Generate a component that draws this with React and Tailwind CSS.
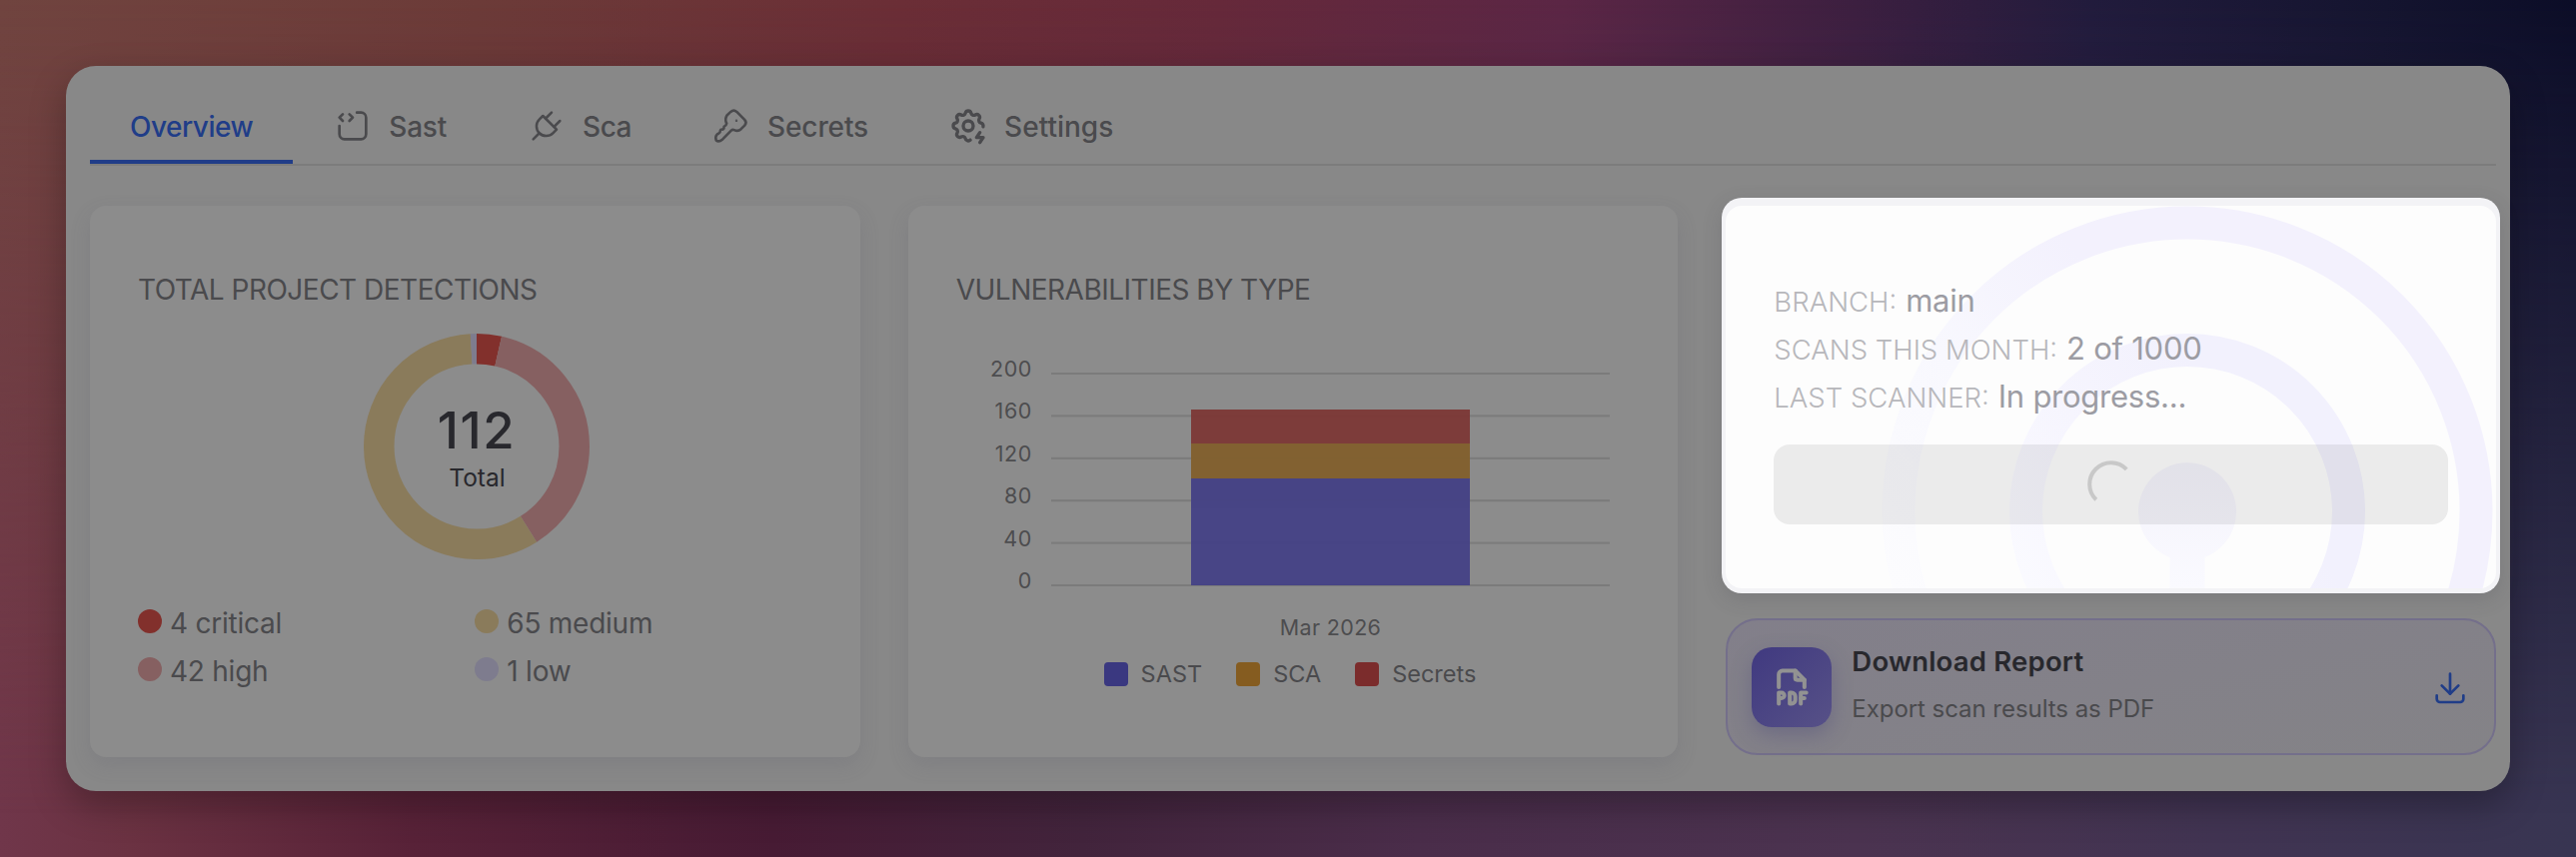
import { TbSourceCode, TbPlug, TbSettingsBolt, TbFileTypePdf, TbDownload } from 'react-icons/tb';

const KeyIcon = () => (
  <svg width="40" height="40" viewBox="0 0 40 40" fill="none" stroke="currentColor" strokeWidth="2.6" strokeLinecap="round" strokeLinejoin="round">
    <path d="M15.5 9.5 L19.3 5.9 Q22.3 3.4 25.3 5.9 L33.2 13.8 Q35.8 16.6 33.2 19.6 L29.6 23.2 Q26.6 26 22.8 24.1 Q21 23.4 19.8 24.6 L11.2 33.4 Q7.4 36.6 4.7 34.4 Q3.4 30.6 5.8 28.4 L7.6 27.3 Q8.9 26.8 8.9 24.6 Q9.2 23.4 11 23.6 Q12.7 23.4 12.6 20.8 Q14.8 20 15.2 17.5 Q13 13.6 15.5 9.5 Z" />
    <circle cx="25" cy="14.7" r="0.4" strokeWidth="1.6" />
  </svg>
);

const tabs = [
  { label: 'Overview', icon: null, active: true, tracking: 'tracking-[-0.48px]' },
  { label: 'Sast', icon: <TbSourceCode size={40} strokeWidth={1.6} />, tracking: 'tracking-[-0.2px]' },
  { label: 'Sca', icon: <TbPlug size={40} strokeWidth={1.5} />, tracking: 'tracking-[-0.5px]' },
  { label: 'Secrets', icon: <KeyIcon />, tracking: 'tracking-[-0.1px]' },
  { label: 'Settings', icon: <TbSettingsBolt size={40} strokeWidth={2} />, tracking: 'tracking-[0px]' },
];

const severities = [
  { count: 4, label: 'critical', color: '#82302c' },
  { count: 42, label: 'high', color: '#866061' },
  { count: 65, label: 'medium', color: '#8a7b5b' },
  { count: 1, label: 'low', color: '#7e7c8e' },
];

const legend = [
  { label: 'SAST', color: 'bg-[#3a3880]' },
  { label: 'SCA', color: 'bg-[#855c20]' },
  { label: 'Secrets', color: 'bg-[#7b2c2c]' },
];

const scanInfo = [
  { label: 'BRANCH:', value: 'main' },
  { label: 'SCANS THIS MONTH:', value: '2 of 1000' },
  { label: 'LAST SCANNER:', value: 'In progress...' },
];

const Donut = () => {
  const total = severities.reduce((sum, s) => sum + s.count, 0);
  let offset = 0;

  return (
    <svg width="226" height="226" viewBox="0 0 226 226">
      <g transform="rotate(-90 113 113)" fill="none" strokeWidth="30.5">
        {severities.map((s) => {
          const start = offset;
          offset += s.count;
          return (
            <circle
              key={s.label}
              cx="113"
              cy="113"
              r="97.75"
              pathLength={total}
              stroke={s.color}
              strokeDasharray={`${s.count} ${total - s.count}`}
              strokeDashoffset={-start}
            />
          );
        })}
      </g>
      <text x="113" y="115" textAnchor="middle" fontSize="51" letterSpacing="1.6" fontWeight="500" fill="#28282d">{total}</text>
      <text x="113.5" y="153" textAnchor="middle" fontSize="24.5" fill="#28282d">Total</text>
    </svg>
  );
};

const BarChart = () => {
  const ticks = [200, 160, 120, 80, 40, 0];

  return (
    <svg width="674" height="290" viewBox="0 0 674 290" className="block">
      {ticks.map((t, i) => (
        <g key={t}>
          <rect x="95" y={20 + i * 42.4} width="559" height="2" fill="#7b7b7b" />
          <text x="76" y={24 + i * 42.4} textAnchor="end" fontSize="21.5" letterSpacing="0.6" fill="#4d4d4f">{t}</text>
        </g>
      ))}
      <g opacity="0.96">
        <rect x="235" y="57" width="279" height="34" fill="#7d3937" />
        <rect x="235" y="91" width="279" height="35" fill="#82602e" />
        <rect x="235" y="126" width="279" height="107" fill="#454285" />
      </g>
      <text x="374.5" y="283" textAnchor="middle" fontSize="21.5" letterSpacing="0.35" fill="#4d4d4f">Mar 2026</text>
    </svg>
  );
};

const Radar = () => (
  <svg className="absolute inset-0" width="771" height="383" viewBox="0 0 771 383" fill="none">
    <defs>
      <linearGradient id="ring" gradientUnits="userSpaceOnUse" x1="160" y1="370" x2="520" y2="60">
        <stop offset="0" stopColor="#fcfcfe" />
        <stop offset="0.4" stopColor="#f8f8fe" />
        <stop offset="0.75" stopColor="#f3f1fd" />
      </linearGradient>
      <linearGradient id="ringInner" gradientUnits="userSpaceOnUse" x1="290" y1="360" x2="560" y2="180">
        <stop offset="0" stopColor="#fafaff" />
        <stop offset="0.4" stopColor="#f6f5fe" />
        <stop offset="0.8" stopColor="#f2f1fd" />
      </linearGradient>
      <linearGradient id="dot" gradientUnits="userSpaceOnUse" x1="462" y1="257" x2="462" y2="383">
        <stop offset="0" stopColor="#f4f3fb" />
        <stop offset="1" stopColor="#fafaff" />
      </linearGradient>
    </defs>
    <circle cx="462" cy="306" r="289" stroke="url(#ring)" strokeWidth="33" />
    <circle cx="462" cy="306" r="161.5" stroke="url(#ringInner)" strokeWidth="33" />
    <path d="M444.5 383 V352 A49 49 0 1 1 479.5 352 V383 Z" fill="url(#dot)" />
  </svg>
);

const ScanCard = () => (
  <div className="-mx-1 -mt-2 rounded-[20px] bg-[#f3f3f6] px-1 pt-2 pb-[5px] shadow-[0_6px_20px_rgba(60,60,70,0.18)]">
    <div className="relative h-[383px] overflow-hidden rounded-2xl bg-[#fdfdfd]">
      <Radar />
      <div className="relative px-12 pt-[71px]">
        {scanInfo.map((row) => (
          <div key={row.label} className="flex h-12 items-baseline gap-[9px] whitespace-nowrap leading-[48px]">
            <span className="text-[27.5px] font-light text-[#b7b7bb]">{row.label}</span>
            <span className="text-[31px] tracking-[-0.25px] text-[#9c9ca3]">{row.value}</span>
          </div>
        ))}
        <button className="mt-6 flex h-20 w-full items-center justify-center rounded-2xl bg-[#18181b]/8">
          <svg width="48" height="48" viewBox="0 0 48 48" fill="none">
            <path d="M39.2 8.8 A21.5 21.5 0 1 0 8.8 39.2" stroke="#c8c8c8" strokeWidth="4" />
          </svg>
        </button>
      </div>
    </div>
  </div>
);

const DownloadCard = () => (
  <div className="mt-[25px] flex h-[137px] items-center rounded-[32px] border-2 border-[#746f8b] bg-gradient-to-br from-[#827f8a] to-[#848387] px-6">
    <div className="flex h-20 w-20 items-center justify-center rounded-[20px] bg-gradient-to-br from-[#403980] to-[#575187] text-[#929292] shadow-[0_8px_20px_rgba(70,65,120,0.35)]">
      <TbFileTypePdf size={44} strokeWidth={2.2} />
    </div>
    <div className="ml-5 flex-1 pb-[3px]">
      <div className="text-[27.5px] leading-[47px] font-semibold tracking-[0.2px] text-[#28282d]">Download Report</div>
      <div className="text-2xl leading-[47px] tracking-[-0.05px] text-[#4a4a4d]">Export scan results as PDF</div>
    </div>
    <TbDownload size={40} strokeWidth={1.6} className="text-[#203d88]" />
  </div>
);

export default function App() {
  return (
    <div className="relative h-[858px] w-[2578px] overflow-hidden bg-[linear-gradient(90deg,#70364a_0%,#6b3242_5%,#582238_16%,#471b34_30%,#42243c_42%,#4a2d4a_55%,#4b3350_72%,#413452_86%,#383552_100%)] p-[66px] font-['Inter','Liberation_Sans',sans-serif]">
      <div className="absolute inset-0 bg-[linear-gradient(95deg,#70443f_0%,#6c3b38_18%,#6b2e36_34%,#66293a_46%,#5b2645_59%,#3c1f40_70%,#211b3c_79%,#14142f_90%,#080a24_100%)] [mask-image:linear-gradient(180deg,black_0%,transparent_95%)]" />

      <div className="relative h-[726px] w-[2446px] rounded-[30px] bg-[#888888] pt-[26px] pr-[14px] pl-6 shadow-[0_14px_36px_rgba(0,0,0,0.28)]">
        {/* Tabs */}
        <nav className="flex border-b-2 border-[#7c7c7c]">
          {tabs.map((tab) => (
            <div
              key={tab.label}
              className={`flex h-[72px] items-center gap-4 border-b-4 px-10 text-[28px] font-medium ${tab.active ? 'border-[#203d88] text-[#203d88]' : 'border-transparent text-[#4a4a4d]'}`}
            >
              {tab.icon}
              <span className={`pt-0.5 ${tab.tracking}`}>{tab.label}</span>
            </div>
          ))}
        </nav>

        <div className="mt-10 grid h-[552px] grid-cols-3 gap-12">
          {/* Detections */}
          <section className="rounded-2xl bg-[#8c8c8c] px-12 pt-[66px] shadow-[0_8px_20px_rgba(90,90,105,0.18)]">
            <h2 className="text-[28px] leading-9 tracking-[-0.5px] text-[#4a4a4d]">TOTAL PROJECT DETECTIONS</h2>
            <div className="mt-[26px] flex justify-center pl-[3px]">
              <Donut />
            </div>
            <div className="mt-[38px] grid grid-flow-col grid-cols-2 grid-rows-2">
              {severities.map((s) => (
                <div key={s.label} className="flex h-12 items-center gap-2 text-[28px] tracking-[-0.25px] text-[#4a4a4d]">
                  <span className="h-6 w-6 rounded-full" style={{ backgroundColor: s.color }} />
                  <span className="pt-1">{s.count} {s.label}</span>
                </div>
              ))}
            </div>
          </section>

          {/* Vulnerabilities */}
          <section className="rounded-2xl bg-[#8c8c8c] px-12 pt-[66px] shadow-[0_8px_20px_rgba(90,90,105,0.18)]">
            <h2 className="text-[28px] leading-9 tracking-[-0.5px] text-[#4a4a4d]">VULNERABILITIES BY TYPE</h2>
            <div className="mt-[45px]">
              <BarChart />
            </div>
            <div className="mt-[14px] flex justify-center gap-[34px] pr-[6px]">
              {legend.map((item) => (
                <div key={item.label} className="flex items-center gap-[13px] text-[23.5px] leading-9 text-[#4a4a4d]">
                  <span className={`h-6 w-6 rounded ${item.color}`} />
                  {item.label}
                </div>
              ))}
            </div>
          </section>

          <section>
            <ScanCard />
            <DownloadCard />
          </section>
        </div>
      </div>
    </div>
  );
}
